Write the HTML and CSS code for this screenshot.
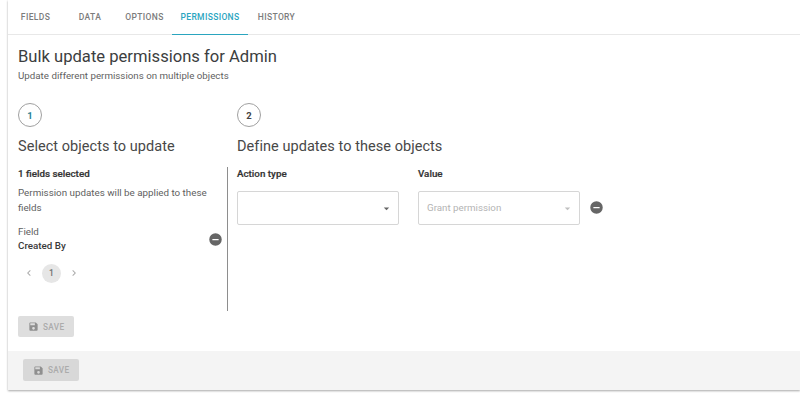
FILE: index.html
```html
<!DOCTYPE html>
<html lang="en">
<head>
<meta charset="utf-8">
<title>Bulk update permissions</title>
<link rel="stylesheet" href="styles.css">
</head>
<body>
<main class="card">
  <nav class="tabs">
    <a class="tab tab-fields">FIELDS</a>
    <a class="tab tab-data">DATA</a>
    <a class="tab tab-options">OPTIONS</a>
    <a class="tab tab-permissions active">PERMISSIONS</a>
    <a class="tab tab-history">HISTORY</a>
  </nav>
  <section class="content">
    <h1 class="title">Bulk update permissions for Admin</h1>
    <p class="subtitle">Update different permissions on multiple objects</p>
    <div class="steps">
      <div class="left">
        <div class="step step-one">1</div>
        <h2 class="heading">Select objects to update</h2>
        <div class="panel-left">
          <div class="strong count">1 fields selected</div>
          <p class="note">Permission updates will be applied to these fields</p>
          <div class="field-row">
            <div>
              <div class="field-label">Field</div>
              <div class="field-name">Created By</div>
            </div>
            <svg class="minus" viewBox="0 0 24 24"><path d="M12 2a10 10 0 1 0 0 20 10 10 0 0 0 0-20zm5 11H7v-2h10v2z"/></svg>
          </div>
          <div class="pager">
            <svg class="chev" viewBox="0 0 24 24"><path d="M15.4 7.4 14 6l-6 6 6 6 1.4-1.4L10.8 12z"/></svg>
            <span class="page">1</span>
            <svg class="chev" viewBox="0 0 24 24"><path d="M8.6 16.6 10 18l6-6-6-6-1.4 1.4L13.2 12z"/></svg>
          </div>
        </div>
      </div>
      <div class="right">
        <div class="step">2</div>
        <h2 class="heading">Define updates to these objects</h2>
        <div class="panel-right">
          <div class="column">
            <div class="strong">Action type</div>
            <div class="select">
              <span></span>
              <svg class="caret" viewBox="0 0 24 24"><path d="M7 10l5 5 5-5z"/></svg>
            </div>
          </div>
          <div class="column">
            <div class="strong">Value</div>
            <div class="select disabled">
              <span class="select-text">Grant permission</span>
              <svg class="caret" viewBox="0 0 24 24"><path d="M7 10l5 5 5-5z"/></svg>
            </div>
          </div>
          <svg class="minus minus-right" viewBox="0 0 24 24"><path d="M12 2a10 10 0 1 0 0 20 10 10 0 0 0 0-20zm5 11H7v-2h10v2z"/></svg>
        </div>
      </div>
    </div>
    <button class="save" disabled>
      <svg class="save-icon" viewBox="0 0 24 24"><path d="M17 3H5a2 2 0 0 0-2 2v14a2 2 0 0 0 2 2h14a2 2 0 0 0 2-2V7l-4-4zm-5 16a3 3 0 1 1 0-6 3 3 0 0 1 0 6zm3-10H5V5h10v4z"/></svg>
      SAVE
    </button>
  </section>
  <footer class="footer">
    <button class="save" disabled>
      <svg class="save-icon" viewBox="0 0 24 24"><path d="M17 3H5a2 2 0 0 0-2 2v14a2 2 0 0 0 2 2h14a2 2 0 0 0 2-2V7l-4-4zm-5 16a3 3 0 1 1 0-6 3 3 0 0 1 0 6zm3-10H5V5h10v4z"/></svg>
      SAVE
    </button>
  </footer>
</main>
</body>
</html>
```
FILE: styles.css
```css
* { box-sizing: border-box; }
html, body { margin: 0; padding: 0; }
body {
  width: 800px;
  height: 400px;
  overflow: hidden;
  background: #fff;
  font-family: Roboto, sans-serif;
  color: #333;
}
.card {
  margin-left: 8px;
  height: 390px;
  background: #fff;
  box-shadow: 0 1px 2px rgba(0,0,0,.35);
  display: flex;
  flex-direction: column;
}
.tabs {
  display: flex;
  height: 35px;
  border-bottom: 1px solid #e8e8e8;
  flex: none;
}
.tab {
  display: flex;
  align-items: center;
  justify-content: center;
  height: 35px;
  font-size: 8.5px;
  font-weight: 500;
  letter-spacing: .35px;
  color: #7c7c7c;
  border-bottom: 1px solid transparent;
}
.tab-fields { width: 55px; }
.tab-data { width: 54px; }
.tab-options { width: 55px; }
.tab-permissions { width: 76px; }
.tab-history { width: 57px; }
.tab.active {
  color: #2aa5bf;
  border-bottom: 1px solid #2aa5bf;
}
.content {
  flex: 1;
  padding: 12px 10px 0;
  display: flex;
  flex-direction: column;
  align-items: flex-start;
}
.title {
  margin: 0;
  font-size: 16.6px;
  font-weight: 400;
  line-height: 20px;
  color: #3c3e40;
}
.subtitle {
  margin: 2px 0 0;
  font-size: 9.75px;
  line-height: 13px;
  color: #5f5f5f;
}
.steps {
  display: flex;
  margin-top: 21px;
}
.left { width: 209px; }
.right { padding-left: 10px; }
.step {
  width: 24px;
  height: 24px;
  border: 1px solid #a0a0a0;
  border-radius: 50%;
  display: flex;
  align-items: center;
  justify-content: center;
  font-size: 9.5px;
  font-weight: 700;
  color: #444;
}
.step-one { color: #2b7f93; }
.heading {
  margin: 10px 0 0;
  font-size: 14.5px;
  font-weight: 400;
  line-height: 20px;
  letter-spacing: .05px;
  color: #484848;
}
.panel-left {
  height: 144px;
  margin-top: 10px;
  padding-right: 4px;
}
.strong {
  font-size: 9.8px;
  font-weight: 500;
  -webkit-text-stroke: .2px #333;
  line-height: 13px;
  color: #333;
}
.note {
  margin: 6px 0 0;
  font-size: 9.8px;
  line-height: 14.5px;
  color: #5f5f5f;
}
.field-row {
  display: flex;
  justify-content: space-between;
  align-items: center;
  margin-top: 9.5px;
}
.field-label {
  font-size: 9.8px;
  line-height: 14.5px;
  color: #5f5f5f;
}
.field-name {
  font-size: 9.8px;
  font-weight: 500;
  line-height: 14.5px;
  color: #3a3a3a;
}
.minus {
  width: 15px;
  height: 15px;
  fill: #666;
  flex: none;
}
.pager {
  display: flex;
  align-items: center;
  gap: 7px;
  margin-top: 10px;
  padding-left: 5px;
}
.chev {
  width: 12px;
  height: 12px;
  fill: #ababab;
}
.page {
  width: 19px;
  height: 19px;
  border-radius: 50%;
  background: #e6e6e6;
  display: flex;
  align-items: center;
  justify-content: center;
  font-size: 8.5px;
  font-weight: 500;
  color: #707070;
}
.panel-right {
  display: flex;
  align-items: flex-start;
  margin-top: 10px;
  margin-left: -10px;
  padding-left: 9px;
  height: 144px;
  border-left: 1px solid #8e8e8e;
  gap: 19px;
}
.column { width: 162px; }
.select {
  display: flex;
  align-items: center;
  justify-content: space-between;
  width: 162px;
  height: 34px;
  margin-top: 11px;
  padding: 0 8px;
  border: 1px solid #d6d6d6;
  border-radius: 2px;
  font-size: 9.75px;
  color: #333;
}
.select-text { margin-bottom: 2px; }
.select.disabled { color: #b4b4b4; }
.caret {
  width: 13px;
  height: 13px;
  fill: #666;
  margin-right: -3px;
}
.disabled .caret { fill: #c0c0c0; }
.minus-right {
  margin: 33px 0 0 -10px;
  align-self: flex-start;
}
.save {
  display: flex;
  align-items: center;
  gap: 4px;
  width: 56px;
  height: 21px;
  padding: 0 0 0 10px;
  border: 0;
  border-radius: 2px;
  background: #dedede;
  font-family: Roboto, sans-serif;
  font-size: 8.2px;
  font-weight: 500;
  letter-spacing: .35px;
  color: #ababab;
}
.content > .save { margin-top: 5px; }
.save-icon {
  width: 11px;
  height: 11px;
  fill: #8f8f8f;
  flex: none;
}
.footer {
  flex: none;
  height: 39px;
  background: #f4f4f4;
  padding: 8px 15px 0;
}
.footer .save {
  width: 56px;
  height: 22px;
  background: #d8d8d8;
}
```
